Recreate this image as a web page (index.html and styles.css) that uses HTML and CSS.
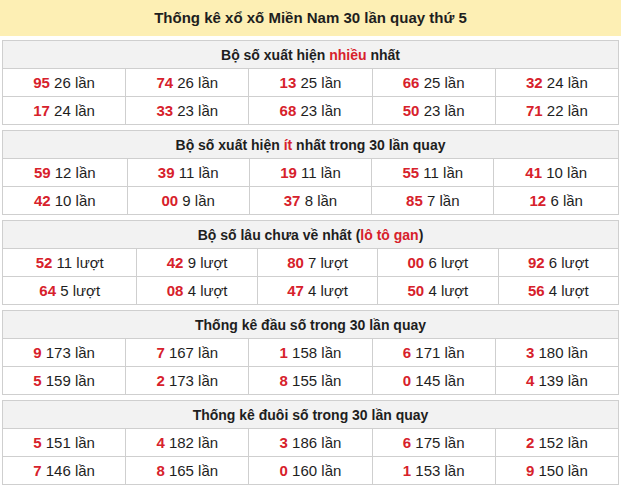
FILE: index.html
```html
<!DOCTYPE html>
<html lang="vi">
<head>
<meta charset="utf-8">
<title>Thống kê xổ xố Miền Nam</title>
<link rel="stylesheet" href="styles.css">
</head>
<body>
<div class="title">Thống kê xổ xố Miền Nam 30 lần quay thứ 5</div>
<div class="wrap">
  <table class="stat">
    <tr><th colspan="5">Bộ số xuất hiện <span class="red">nhiều</span> nhất</th></tr>
    <tr><td><b>95</b> 26 lần</td><td><b>74</b> 26 lần</td><td><b>13</b> 25 lần</td><td><b>66</b> 25 lần</td><td><b>32</b> 24 lần</td></tr>
    <tr><td><b>17</b> 24 lần</td><td><b>33</b> 23 lần</td><td><b>68</b> 23 lần</td><td><b>50</b> 23 lần</td><td><b>71</b> 22 lần</td></tr>
  </table>
  <table class="stat">
    <tr><th colspan="5">Bộ số xuất hiện <span class="red">ít</span> nhất trong 30 lần quay</th></tr>
    <tr><td><b>59</b> 12 lần</td><td><b>39</b> 11 lần</td><td><b>19</b> 11 lần</td><td><b>55</b> 11 lần</td><td><b>41</b> 10 lần</td></tr>
    <tr><td><b>42</b> 10 lần</td><td><b>00</b> 9 lần</td><td><b>37</b> 8 lần</td><td><b>85</b> 7 lần</td><td><b>12</b> 6 lần</td></tr>
  </table>
  <table class="stat">
    <tr><th colspan="5">Bộ số lâu chưa về nhất (<span class="red">lô tô gan</span>)</th></tr>
    <tr><td><b>52</b> 11 lượt</td><td><b>42</b> 9 lượt</td><td><b>80</b> 7 lượt</td><td><b>00</b> 6 lượt</td><td><b>92</b> 6 lượt</td></tr>
    <tr><td><b>64</b> 5 lượt</td><td><b>08</b> 4 lượt</td><td><b>47</b> 4 lượt</td><td><b>50</b> 4 lượt</td><td><b>56</b> 4 lượt</td></tr>
  </table>
  <table class="stat">
    <tr><th colspan="5">Thống kê đầu số trong 30 lần quay</th></tr>
    <tr><td><b>9</b> 173 lần</td><td><b>7</b> 167 lần</td><td><b>1</b> 158 lần</td><td><b>6</b> 171 lần</td><td><b>3</b> 180 lần</td></tr>
    <tr><td><b>5</b> 159 lần</td><td><b>2</b> 173 lần</td><td><b>8</b> 155 lần</td><td><b>0</b> 145 lần</td><td><b>4</b> 139 lần</td></tr>
  </table>
  <table class="stat">
    <tr><th colspan="5">Thống kê đuôi số trong 30 lần quay</th></tr>
    <tr><td><b>5</b> 151 lần</td><td><b>4</b> 182 lần</td><td><b>3</b> 186 lần</td><td><b>6</b> 175 lần</td><td><b>2</b> 152 lần</td></tr>
    <tr><td><b>7</b> 146 lần</td><td><b>8</b> 165 lần</td><td><b>0</b> 160 lần</td><td><b>1</b> 153 lần</td><td><b>9</b> 150 lần</td></tr>
  </table>
</div>
</body>
</html>
```
FILE: styles.css
```css
body {
  margin: 0;
  background: #fff;
  font-family: "Liberation Sans", Arial, sans-serif;
  color: #1e1e1e;
}
.title {
  background: #fdefb4;
  height: 36px;
  line-height: 35px;
  text-align: center;
  font-size: 15px;
  font-weight: bold;
}
.wrap {
  padding: 4px 2px 0;
}
.stat {
  width: 100%;
  border-collapse: collapse;
  margin-bottom: 5px;
}
.stat th {
  background: #f2f2f2;
  border: 1px solid #cfcfcf;
  height: 27px;
  padding: 0;
  font-size: 14px;
  font-weight: bold;
  text-align: center;
}
.stat td {
  border: 1px solid #cfcfcf;
  height: 27px;
  padding: 0;
  text-align: center;
  font-size: 15px;
}
.stat td b {
  color: #d7212b;
}
.red {
  color: #d7212b;
}
```
